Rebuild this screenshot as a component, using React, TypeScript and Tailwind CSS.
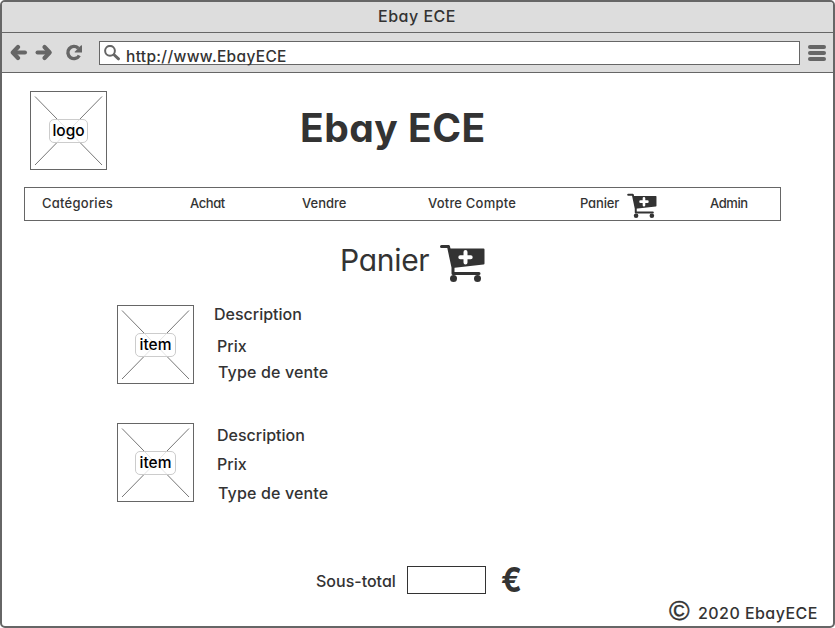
import type { ReactNode } from "react";

const FONT = "font-['Inter','Liberation_Sans',sans-serif] [font-feature-settings:'cv11']";

function Label({ className = "", children }: { className?: string; children: ReactNode }) {
  return <span className={`block h-5 leading-5 whitespace-nowrap ${className}`}>{children}</span>;
}

function Cart({ className }: { className: string }) {
  return (
    <svg className={className} viewBox="0 0 45 38" fill="none">
      <path d="M1.500 2.500H8.500L13 23.500V29.500H39" stroke="#333" strokeWidth="3" strokeLinecap="round" strokeLinejoin="round" />
      <path d="M9 4.500H43.500Q44.500 4.500 44.500 5.500V19.500Q44.500 20.500 43.500 20.500L12.500 24Z" fill="#333" />
      <path d="M25.500 8V18.500M20.300 13.200H30.700" stroke="#fff" strokeWidth="4" strokeLinecap="round" />
      <circle cx="13.500" cy="34.500" r="3.500" fill="#333" />
      <circle cx="37.500" cy="34.500" r="3.500" fill="#333" />
    </svg>
  );
}

function Placeholder({ text, className = "" }: { text: string; className?: string }) {
  const box = text === "logo" ? "w-[39px]" : "w-[41px]";
  return (
    <div className={`grid h-[79px] w-[77px] shrink-0 place-items-center border border-[#666] ${className}`}>
      <svg className="col-start-1 row-start-1 h-[77px] w-[75px]" viewBox="0 0 75 77">
        <path d="M4 4.500L71 73M71 4.500L4 73" stroke="#777" strokeWidth="1" />
      </svg>
      <span
        className={`z-10 col-start-1 row-start-1 flex h-6 items-center justify-center rounded-[5px] border border-[#ccc] bg-white/80 text-[15.500px] font-medium text-black ${box}`}
      >
        {text}
      </span>
    </div>
  );
}

function Toolbar() {
  return (
    <div className="flex h-10 items-start border-b border-[#666] bg-[#ddd] text-[#666]">
      <svg className="ml-2 mt-[11px] h-[17px] w-[18px]" viewBox="0 0 18 17" fill="none" stroke="currentColor" strokeLinecap="round" strokeLinejoin="round">
        <path d="M3.500 8.500H15" strokeWidth="4" />
        <path d="M8 3L2.800 8.500L8 14" strokeWidth="4.200" />
      </svg>
      <svg className="ml-[7px] mt-[11px] h-[17px] w-[18px]" viewBox="0 0 18 17" fill="none" stroke="currentColor" strokeLinecap="round" strokeLinejoin="round">
        <path d="M2.500 8.500H14" strokeWidth="4" />
        <path d="M9.500 3L14.700 8.500L9.500 14" strokeWidth="4.200" />
      </svg>
      <svg className="ml-3 mt-[11px] h-[17px] w-[18px]" viewBox="0 0 18 17" fill="none">
        <path d="M13.300 4.200A6.100 6.100 0 1 0 14.300 11.500" stroke="currentColor" strokeWidth="3.400" />
        <path d="M17 1.500V8.500H10L9.500 8L16.200 1.300Z" fill="currentColor" />
      </svg>
      <div className="ml-4 mt-2 flex h-6 w-[701px] items-start border border-[#666] bg-white">
        <svg className="ml-1 mt-[3px] h-[17px] w-[17px]" viewBox="0 0 17 17" fill="none" stroke="currentColor">
          <circle cx="6" cy="5.800" r="4.900" strokeWidth="2" />
          <path d="M10.300 10L14.500 13.800" strokeWidth="3" strokeLinecap="round" />
        </svg>
        <Label className="ml-[5px] mt-[5px] text-[15.500px] tracking-[0.330px] font-medium text-[#333]">http://www.EbayECE</Label>
      </div>
      <div className="ml-2 mt-3 flex flex-col gap-0.5">
        <i className="h-1 w-[18px] rounded-full bg-[#666]" />
        <i className="h-1 w-[18px] rounded-full bg-[#666]" />
        <i className="h-1 w-[18px] rounded-full bg-[#666]" />
      </div>
    </div>
  );
}

function Nav() {
  return (
    <nav className="ml-[22px] mt-[17px] flex h-[34px] w-[757px] items-start border border-[#666] pt-[5px] text-[13px] font-medium">
      <Label className="ml-[17px] w-[148px] tracking-[0.250px]">Catégories</Label>
      <Label className="w-28 tracking-[-0.400px]">Achat</Label>
      <Label className="w-[126px]">Vendre</Label>
      <Label className="w-[152px] tracking-[0.200px]">Votre Compte</Label>
      <Label className="w-[47px] tracking-[-0.150px]">Panier</Label>
      <Cart className="h-[25px] w-[30px]" />
      <Label className="ml-[53px] tracking-[-0.400px]">Admin</Label>
    </nav>
  );
}

export default function App() {
  return (
    <div className="h-[628px] w-[835px] bg-white">
      <div className={`flex h-full flex-col overflow-hidden rounded-[5px] border-2 border-[#666] bg-white text-base text-[#333] ${FONT}`}>
        <header className="flex h-[31px] shrink-0 justify-center border-b border-[#666] bg-[#ddd] pt-1 font-medium">
          <Label className="pr-px tracking-[0.500px]">Ebay ECE</Label>
        </header>
        <Toolbar />
        <div className="mt-[18px] flex">
          <Placeholder text="logo" className="ml-7" />
          <h1 className="ml-[193px] mt-2 h-[58px] text-[39px] leading-[58px] font-bold tracking-[0.500px] whitespace-nowrap">Ebay ECE</h1>
        </div>
        <Nav />
        <div className="mt-[23px] flex h-[38px]">
          <h2 className="ml-[338px] w-[100px] text-[30px] leading-8 tracking-[-0.300px] whitespace-nowrap">Panier</h2>
          <Cart className="h-[38px] w-[45px]" />
        </div>
        <div className="mt-[23px] flex h-[79px]">
          <Placeholder text="item" className="ml-[115px]" />
          <div className="font-medium">
            <Label className="ml-5 -mt-px">Description</Label>
            <Label className="ml-[23px] mt-3">Prix</Label>
            <Label className="ml-6 mt-1.5 tracking-[0.150px]">Type de vente</Label>
          </div>
        </div>
        <div className="mt-[39px] flex h-[79px]">
          <Placeholder text="item" className="ml-[115px]" />
          <div className="font-medium">
            <Label className="ml-[23px] mt-0.5">Description</Label>
            <Label className="ml-[23px] mt-[9px]">Prix</Label>
            <Label className="ml-6 mt-[9px] tracking-[0.150px]">Type de vente</Label>
          </div>
        </div>
        <div className="mt-16 flex h-7 items-center">
          <Label className="ml-[314px] mt-0.5 w-[91px] font-medium">Sous-total</Label>
          <div className="h-7 w-[79px] border border-[#333]" />
          <span className="ml-[15px] w-5 origin-left scale-x-90 text-[34px] leading-7 font-bold">€</span>
        </div>
        <footer className="mt-[5px] flex h-6 items-center font-medium">
          <span className="ml-[667px] w-[29px] font-['Liberation_Sans',sans-serif] text-[28px] leading-6 font-normal [-webkit-text-stroke:0.400px_#333]">©</span>
          <Label className="mt-1 tracking-[0.450px]">2020 EbayECE</Label>
        </footer>
      </div>
    </div>
  );
}
